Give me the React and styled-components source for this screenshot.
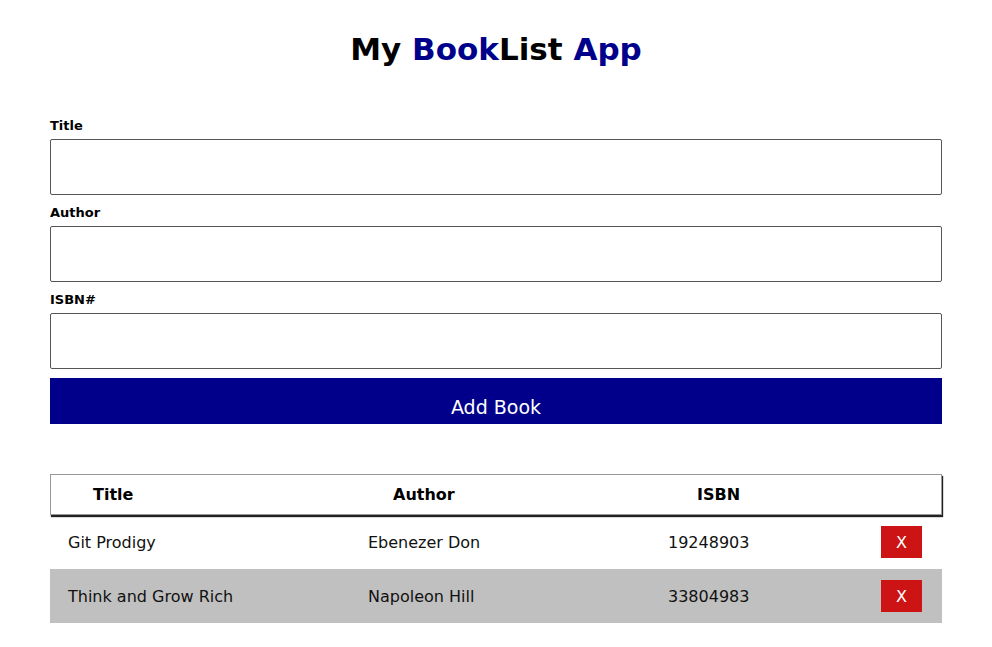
import React, { useState } from 'react'
import styled, { createGlobalStyle } from 'styled-components'

const GlobalStyle = createGlobalStyle`
  body {
    margin: 0;
    background: #fff;
    font-family: "DejaVu Sans", Verdana, sans-serif;
    color: #111;
  }
`;

const initialBooks = [
  { title: 'Git Prodigy', author: 'Ebenezer Don', isbn: '19248903' },
  { title: 'Think and Grow Rich', author: 'Napoleon Hill', isbn: '33804983' },
]

const App = () => {
  const [books, setBooks] = useState(initialBooks)

  const onRemoveHandler = (isbn) => {
    setBooks(books.filter((b) => b.isbn !== isbn))
  }

  return (
    <StPage>
      <GlobalStyle />
      <StHeading>
        My <StBlue>Book</StBlue>List <StBlue>App</StBlue>
      </StHeading>

      <StForm onSubmit={(e) => e.preventDefault()}>
        <StField>
          <StLabel htmlFor="title">Title</StLabel>
          <StInput id="title" type="text" />
        </StField>
        <StField>
          <StLabel htmlFor="author">Author</StLabel>
          <StInput id="author" type="text" />
        </StField>
        <StField>
          <StLabel htmlFor="isbn">ISBN#</StLabel>
          <StInput id="isbn" type="text" />
        </StField>
        <StSubmit type="submit">Add Book</StSubmit>
      </StForm>

      <StTable>
        <StHeadRow>
          <StHeadCell>Title</StHeadCell>
          <StHeadCell>Author</StHeadCell>
          <StHeadCell $isbn>ISBN</StHeadCell>
          <span />
        </StHeadRow>
        {books.map((book, i) => (
          <StRow key={book.isbn} $striped={i % 2 === 1}>
            <StCell>{book.title}</StCell>
            <StCell>{book.author}</StCell>
            <StCell>{book.isbn}</StCell>
            <StDelete onClick={() => onRemoveHandler(book.isbn)}>X</StDelete>
          </StRow>
        ))}
      </StTable>
    </StPage>
  )
}

export default App

const StPage = styled.div`
  width: 892px;
  margin: 0 auto;
  padding-top: 30px;
`;

const StHeading = styled.h1`
  margin: 0 0 50px;
  text-align: center;
  font-size: 31px;
  font-weight: 700;
  line-height: 38px;
  color: #000;
`;

const StBlue = styled.span`
  color: #00008b;
`;

const StForm = styled.form`
  display: flex;
  flex-direction: column;
`;

const StField = styled.div`
  display: flex;
  flex-direction: column;
  margin-bottom: 10px;
  &:nth-of-type(3) {
    margin-bottom: 9px;
  }
`;

const StLabel = styled.label`
  font-size: 13px;
  font-weight: 700;
  line-height: 16px;
  margin-bottom: 5px;
  color: #000;
`;

const StInput = styled.input`
  box-sizing: border-box;
  height: 56px;
  border: 1px solid #555;
  border-radius: 2px;
  padding: 0 10px;
  font: inherit;
  font-size: 16px;
`;

const StSubmit = styled.button`
  height: 46px;
  padding: 18px 0 0;
  border: none;
  background: #00008b;
  color: #fff;
  font-family: "DejaVu Sans", Verdana, sans-serif;
  font-size: 19px;
  line-height: 23px;
  cursor: pointer;
  display: flex;
  justify-content: center;
  align-items: flex-start;
`;

const StTable = styled.div`
  margin-top: 50px;
`;

const StHeadRow = styled.div`
  position: relative;
  z-index: 1;
  display: grid;
  grid-template-columns: 300px 300px 1fr auto;
  box-sizing: border-box;
  height: 41px;
  align-items: center;
  border: 1px solid #999;
  box-shadow: 1px 2px 1px #222;
`;

const StHeadCell = styled.div`
  padding-left: ${(p) => (p.$isbn ? '46px' : '42px')};
  font-size: 16px;
  font-weight: 700;
  color: #000;
`;

const StRow = styled.div`
  display: grid;
  grid-template-columns: 300px 300px 1fr auto;
  align-items: center;
  height: 54px;
  background: ${(p) => (p.$striped ? '#c0c0c0' : '#fff')};
`;

const StCell = styled.div`
  padding-left: 18px;
  font-size: 16px;
  color: #111;
`;

const StDelete = styled.button`
  width: 41px;
  height: 32px;
  margin-right: 20px;
  border: none;
  background: #cc1414;
  color: #fff;
  font-family: "DejaVu Sans", Verdana, sans-serif;
  font-size: 16px;
  cursor: pointer;
`;
